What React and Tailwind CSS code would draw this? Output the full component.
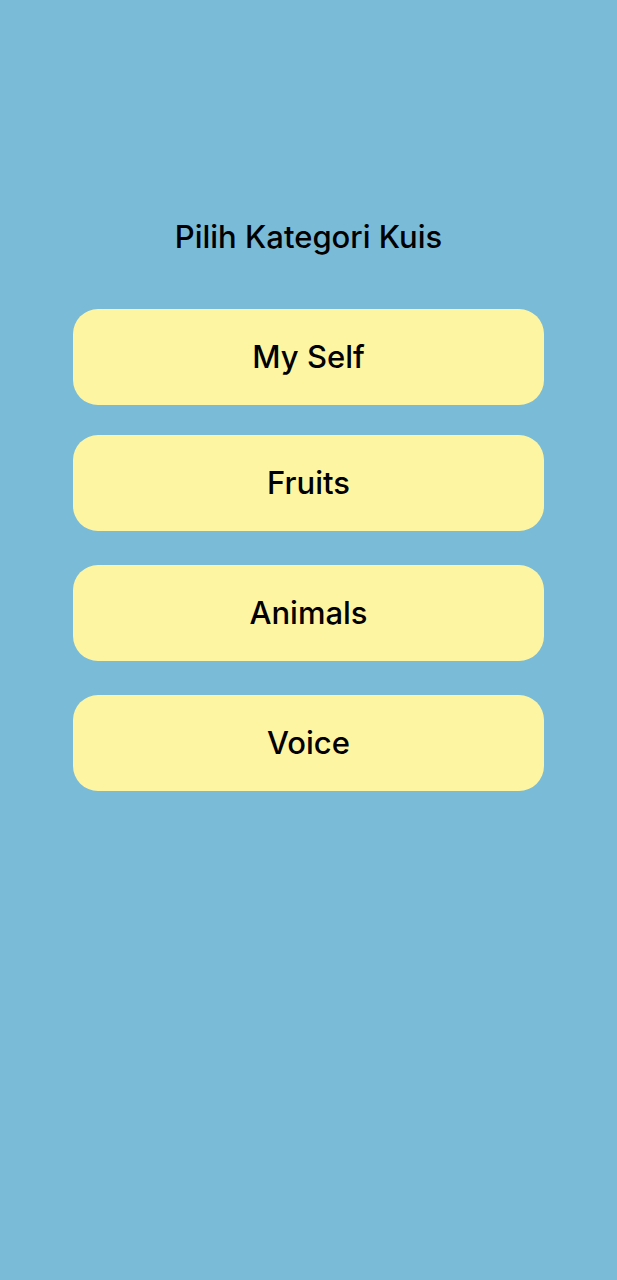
export default function App() {
  const items = [
    { label: "My Self", mt: "mt-0" },
    { label: "Fruits", mt: "mt-[30px]" },
    { label: "Animals", mt: "mt-[34px]" },
    { label: "Voice", mt: "mt-[34px]" },
  ];
  return (
    <div
      className="w-[617px] h-[1280px] bg-[#7abbd7] flex flex-col items-center text-black"
      style={{ fontFamily: "Inter, 'Noto Sans', sans-serif" }}
    >
      <h1 className="mt-[218px] text-[31px] leading-[38px] font-medium">Pilih Kategori Kuis</h1>
      <div className="mt-[53px] w-[471px] flex flex-col">
        {items.map((it) => (
          <button
            key={it.label}
            className={`${it.mt} h-[96px] w-full rounded-[25px] bg-[#fef5a3] text-[31px] font-medium flex items-center justify-center`}
          >
            {it.label}
          </button>
        ))}
      </div>
    </div>
  );
}
